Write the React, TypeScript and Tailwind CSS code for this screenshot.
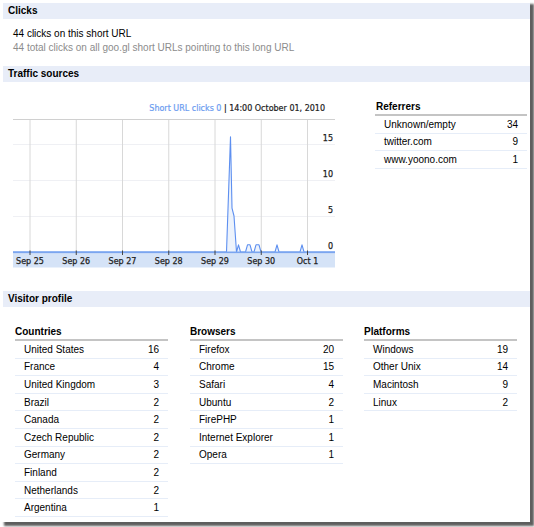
import React from "react";

type Row = { name: string; count: number };

const referrers: Row[] = [
  { name: "Unknown/empty", count: 34 },
  { name: "twitter.com", count: 9 },
  { name: "www.yoono.com", count: 1 },
];

const countries: Row[] = [
  { name: "United States", count: 16 },
  { name: "France", count: 4 },
  { name: "United Kingdom", count: 3 },
  { name: "Brazil", count: 2 },
  { name: "Canada", count: 2 },
  { name: "Czech Republic", count: 2 },
  { name: "Germany", count: 2 },
  { name: "Finland", count: 2 },
  { name: "Netherlands", count: 2 },
  { name: "Argentina", count: 1 },
];

const browsers: Row[] = [
  { name: "Firefox", count: 20 },
  { name: "Chrome", count: 15 },
  { name: "Safari", count: 4 },
  { name: "Ubuntu", count: 2 },
  { name: "FirePHP", count: 1 },
  { name: "Internet Explorer", count: 1 },
  { name: "Opera", count: 1 },
];

const platforms: Row[] = [
  { name: "Windows", count: 19 },
  { name: "Other Unix", count: 14 },
  { name: "Macintosh", count: 9 },
  { name: "Linux", count: 2 },
];

// chart geometry (svg origin = top-left of plot area)
const gridX = [17, 63.25, 109.5, 155.75, 202, 248.25, 294.5];
const days = ["Sep 25", "Sep 26", "Sep 27", "Sep 28", "Sep 29", "Sep 30", "Oct 1"];
const base = 133;
const unit = 7.2;

// points in page coords, shifted into svg space below
const raw: [number, number][] = [
  [13, 0], [226.5, 0], [230.5, 16], [232, 6.1], [234, 5], [236.5, 0],
  [238.5, 1], [240.5, 0], [245.5, 0], [247.5, 1], [250, 1], [252, 0],
  [254, 0], [256, 1], [259, 1], [261, 0], [275, 0], [277, 1], [279, 0],
  [300, 0], [302, 1], [304, 0], [335, 0],
];
const pts = raw.map(([x, v]) => `${x - 13},${base - v * unit}`).join(" ");

const SectionBar = ({ title }: { title: string }) => (
  <div className="ml-[3px] h-4 bg-[#e8edf8] pl-[5px] text-[10px] font-bold leading-4 text-black">
    {title}
  </div>
);

const TableRows = ({ rows }: { rows: Row[] }) => (
  <div className="border-t-2 border-[#c4c4c4]">
    {rows.map((r) => (
      <div
        key={r.name}
        className="flex h-[17.6px] items-center justify-between border-b border-[#e6edf8] px-[9px] text-[10px] text-black"
      >
        <span>{r.name}</span>
        <span>{r.count}</span>
      </div>
    ))}
  </div>
);

const StatTable = ({ title, rows, className = "" }: { title: string; rows: Row[]; className?: string }) => (
  <div className={`w-[153px] ${className}`}>
    <div className="h-[14px] text-[10px] font-bold leading-[14px] text-black">{title}</div>
    <TableRows rows={rows} />
  </div>
);

const Chart = () => (
  <div className="flex w-[322px] flex-col pt-5">
    <div className="h-[14px] pr-[10px] text-right text-[8px] leading-[14px] text-[#222] font-['DejaVu_Sans',sans-serif] [-webkit-text-stroke:0.2px]">
      <span className="text-[#6b9cf0]">Short URL clicks 0</span> | 14:00 October 01, 2010
    </div>
    <svg width="322" height="149" className="mt-[3px]" style={{ fontFamily: "'DejaVu Sans', sans-serif" }}>
      <line x1="0" y1="0.5" x2="322" y2="0.5" stroke="#d0d0d0" />
      {[25, 61, 97].map((y) => (
        <line key={y} x1="0" y1={y + 0.5} x2="322" y2={y + 0.5} stroke="#eff0f4" />
      ))}
      {gridX.map((x) => (
        <line key={x} x1={x} y1="1" x2={x} y2={base} stroke="#d8d8d8" />
      ))}
      <polygon points={`0,${base} ${pts} 322,${base}`} fill="#e6eefb" opacity="0.7" />
      <polyline points={pts} fill="none" stroke="#5d8ff0" strokeWidth="1.1" strokeLinejoin="round" />
      <rect x="0" y={base - 0.5} width="322" height="2" fill="#7ba5ef" />
      <rect x="0" y={base + 1.5} width="322" height="14" fill="#d5e3f7" />
      {gridX.map((x) => (
        <line key={"t" + x} x1={x} y1={base - 1.5} x2={x} y2={base + 3} stroke="#444" />
      ))}
      {days.map((d, i) => (
        <text key={d} x={gridX[i]} y={base + 11.5} textAnchor="middle" fontSize="8" fill="#222" stroke="#222" strokeWidth="0.25">
          {d}
        </text>
      ))}
      {[
        ["15", 25],
        ["10", 61],
        ["5", 97],
        ["0", 133],
      ].map(([l, y]) => (
        <text key={l} x="320" y={(y as number) - 3} textAnchor="end" fontSize="8" fill="#222" stroke="#222" strokeWidth="0.25">
          {l}
        </text>
      ))}
    </svg>
  </div>
);

export default function App() {
  return (
    <div className="h-[527px] w-[534px] bg-white font-['Liberation_Sans',Arial,sans-serif]">
      <div className="h-[522px] w-[530px] bg-white pt-[3px] shadow-[4px_4px_2px_rgba(40,40,40,0.75)]">
        <SectionBar title="Clicks" />
        <div className="mt-2 pl-[13px] text-[10px] leading-[14px]">
          <div className="text-black">44 clicks on this short URL</div>
          <div className="text-[#8c8c8c]">44 total clicks on all goo.gl short URLs pointing to this long URL</div>
        </div>
        <div className="mt-[11px]">
          <SectionBar title="Traffic sources" />
        </div>
        <div className="flex pl-[13px]">
          <Chart />
          <div className="ml-10 mt-[18px] w-[152px]">
            <div className="h-[14px] pl-px text-[10px] font-bold leading-[14px] text-black">Referrers</div>
            <TableRows rows={referrers} />
          </div>
        </div>
        <div className="mt-[23px]">
          <SectionBar title="Visitor profile" />
        </div>
        <div className="mt-[18px] flex pl-[15px]">
          <StatTable title="Countries" rows={countries} />
          <StatTable title="Browsers" rows={browsers} className="ml-[22px]" />
          <StatTable title="Platforms" rows={platforms} className="ml-[21px]" />
        </div>
      </div>
    </div>
  );
}
